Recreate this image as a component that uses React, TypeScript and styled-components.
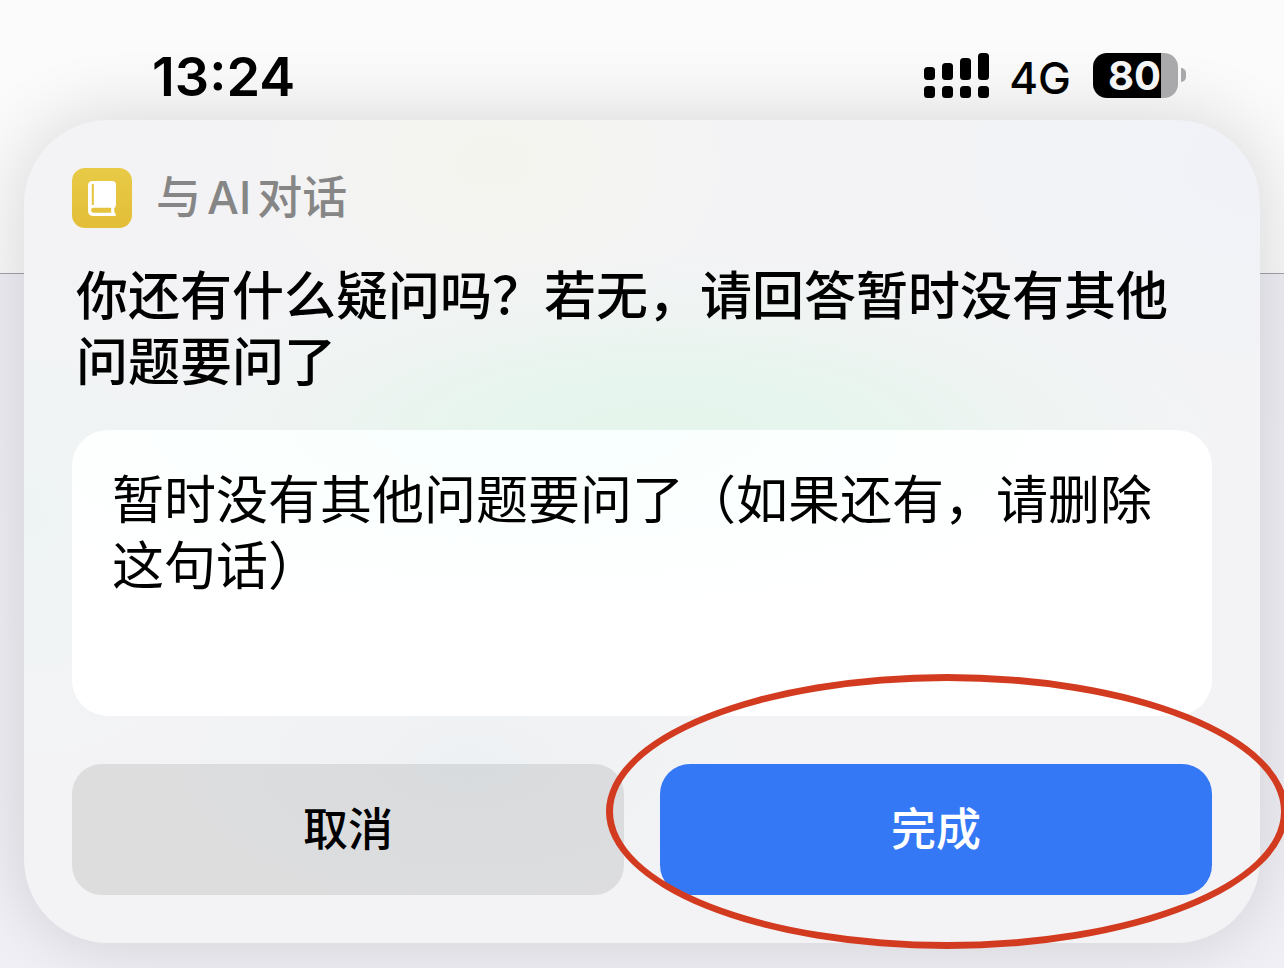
import React from "react";
import styled, { createGlobalStyle } from "styled-components";

const GlobalStyle = createGlobalStyle`
  * { box-sizing: border-box; }
  body {
    margin: 0;
    color: #000;
    font-family: Inter, "Noto Sans CJK SC", sans-serif;
  }
`;

const Screen = styled.div`
  min-height: 100vh;
  overflow: hidden;
  background:
    linear-gradient(#a4a3a8, #a4a3a8) 0 273px / 100% 1px no-repeat,
    linear-gradient(#fbfbfc 0, #f9f9f9 273px, #efeef5 273px, #f1f0f6 100%);
`;

const StatusBar = styled.header`
  display: flex;
  align-items: center;
  justify-content: space-between;
  height: 120px;
  padding: 30px 98px 0 152px;
`;

const Clock = styled.time`
  padding-top: 4px;
  font-size: 54px;
  font-weight: 600;
  line-height: 64px;
`;

const Indicators = styled.div`
  display: flex;
  align-items: center;
  gap: 20px;
`;

const Network = styled.span`
  padding: 6px 2px 0 0;
  font-size: 44px;
  font-weight: 500;
  line-height: 48px;
`;

const Battery = styled.div`
  display: flex;
  align-items: center;
  gap: 3px;
`;

const BatteryBody = styled.div`
  width: 85px;
  height: 45px;
  padding-left: 15px;
  border-radius: 14px;
  background: linear-gradient(90deg, #000 80%, #a9a9ab 80%);
  color: #f5f5f5;
  font-size: 40px;
  font-weight: 700;
  line-height: 45px;
`;

const BatteryTip = styled.div`
  width: 5px;
  height: 14px;
  border-radius: 0 7px 7px 0;
  background: #a9a9ab;
`;

const Dialog = styled.form`
  margin: 0 24px;
  padding: 48px;
  border-radius: 84px;
  background:
    radial-gradient(ellipse 560px 180px at 52% 38%, #e5f5ec 0%, #e6f5ed 30%, #ecf4f0aa 65%, #f0f3f200 100%),
    radial-gradient(ellipse 240px 170px at 38% 5%, #f4f4ee 0%, #f4f4ee00 100%),
    radial-gradient(ellipse 380px 260px at 100% 5%, #f0f2f8 0%, #f0f2f800 100%),
    radial-gradient(ellipse 240px 260px at 0% 48%, #eef4f3 0%, #eef4f300 100%),
    radial-gradient(ellipse 320px 160px at 36% 78%, #eef1f3 0%, #eef1f300 100%),
    #f3f3f5;
  box-shadow: 0 0 72px rgba(0, 0, 0, 0.15);
`;

const AppRow = styled.div`
  display: flex;
  align-items: center;
  gap: 24px;
  height: 60px;
`;

const AppIcon = styled.svg`
  width: 60px;
  height: 60px;
`;

const AppName = styled.span`
  display: flex;
  gap: 6px;
  color: #868686;
  font-size: 45px;
  font-weight: 500;
  line-height: 62px;
`;

const Question = styled.label`
  display: block;
  margin-top: 36px;
  padding: 0 4px;
  font-size: 52px;
  font-weight: 500;
  line-height: 66px;
`;

const Answer = styled.textarea`
  display: block;
  width: 100%;
  height: 286px;
  margin-top: 34px;
  padding: 38px 40px;
  border: 0;
  border-radius: 36px;
  outline: 0;
  resize: none;
  overflow: hidden;
  background: radial-gradient(ellipse 640px 190px at 40% 0, #f8fffe, #fff);
  color: #000;
  font-family: inherit;
  font-size: 52px;
  font-weight: 400;
  line-height: 66px;
`;

const Actions = styled.div`
  display: grid;
  grid-template-columns: 1fr 1fr;
  gap: 36px;
  margin-top: 48px;
`;

const Highlighted = styled.div`
  position: relative;
`;

const Ring = styled.span`
  position: absolute;
  inset: -90px -76px -54px -54px;
  border: 7px solid #d23b20;
  border-radius: 50%;
  pointer-events: none;
`;

const Button = styled.button<{ $primary?: boolean }>`
  display: block;
  width: 100%;
  height: 131px;
  padding: 0;
  border: 0;
  border-radius: 30px;
  background: ${(p) => (p.$primary ? "#3478f6" : "rgba(0, 0, 0, 0.09)")};
  color: ${(p) => (p.$primary ? "#fff" : "#000")};
  font-family: inherit;
  font-size: 45px;
  font-weight: 500;
  line-height: 60px;
`;

const signalHeights = [13, 17, 22, 27];

function Signal() {
  return (
    <svg width="65" height="45" viewBox="0 0 65 45" aria-label="信号">
      {signalHeights.map((h, i) => (
        <g key={h}>
          <rect x={i * 18} y={27 - h} width="11" height={h} rx="3.5" />
          <rect x={i * 18} y="33" width="11" height="12" rx="3.5" />
        </g>
      ))}
    </svg>
  );
}

function BookIcon() {
  return (
    <AppIcon viewBox="0 0 60 60" aria-hidden="true">
      <defs>
        <linearGradient id="gold" x1="0" y1="0" x2="0" y2="1">
          <stop offset="0" stopColor="#e8ca46" />
          <stop offset="1" stopColor="#e3be38" />
        </linearGradient>
      </defs>
      <rect width="60" height="60" rx="13" fill="url(#gold)" />
      <path
        fill="#fff"
        d="M20.500 13H40a4 4 0 0 1 4 4V36.500q0 2.500-1.800 3.800v2.500q0 2 1.800 3.700v.5q0 1-1 1H21.500Q16 48 16 42.500V17.500Q16 13 20.500 13Z"
      />
      <path fill="#e5c33e" d="M20.200 16h1.600v21h-1.600q-.4 0-.4.400V16.400q0-.4.400-.4Z" />
      <path
        fill="#e5c33e"
        d="M21.500 39.800H38.500q1 0 .8 1q-.5 1.600 0 3q.2.900-.8.900H21.500a2.450 2.450 0 0 1 0-4.900Z"
      />
    </AppIcon>
  );
}

export default function App() {
  return (
    <Screen>
      <GlobalStyle />
      <StatusBar>
        <Clock>13:24</Clock>
        <Indicators>
          <Signal />
          <Network>4G</Network>
          <Battery>
            <BatteryBody>80</BatteryBody>
            <BatteryTip />
          </Battery>
        </Indicators>
      </StatusBar>
      <Dialog onSubmit={(e) => e.preventDefault()}>
        <AppRow>
          <BookIcon />
          <AppName>
            与 <span>AI</span> 对话
          </AppName>
        </AppRow>
        <Question htmlFor="answer">
          你还有什么疑问吗？若无，请回答暂时没有其他问题要问了
        </Question>
        <Answer
          id="answer"
          spellCheck={false}
          defaultValue="暂时没有其他问题要问了（如果还有，请删除这句话）"
        />
        <Actions>
          <Button type="button">取消</Button>
          <Highlighted>
            <Button type="submit" $primary>
              完成
            </Button>
            <Ring />
          </Highlighted>
        </Actions>
      </Dialog>
    </Screen>
  );
}
